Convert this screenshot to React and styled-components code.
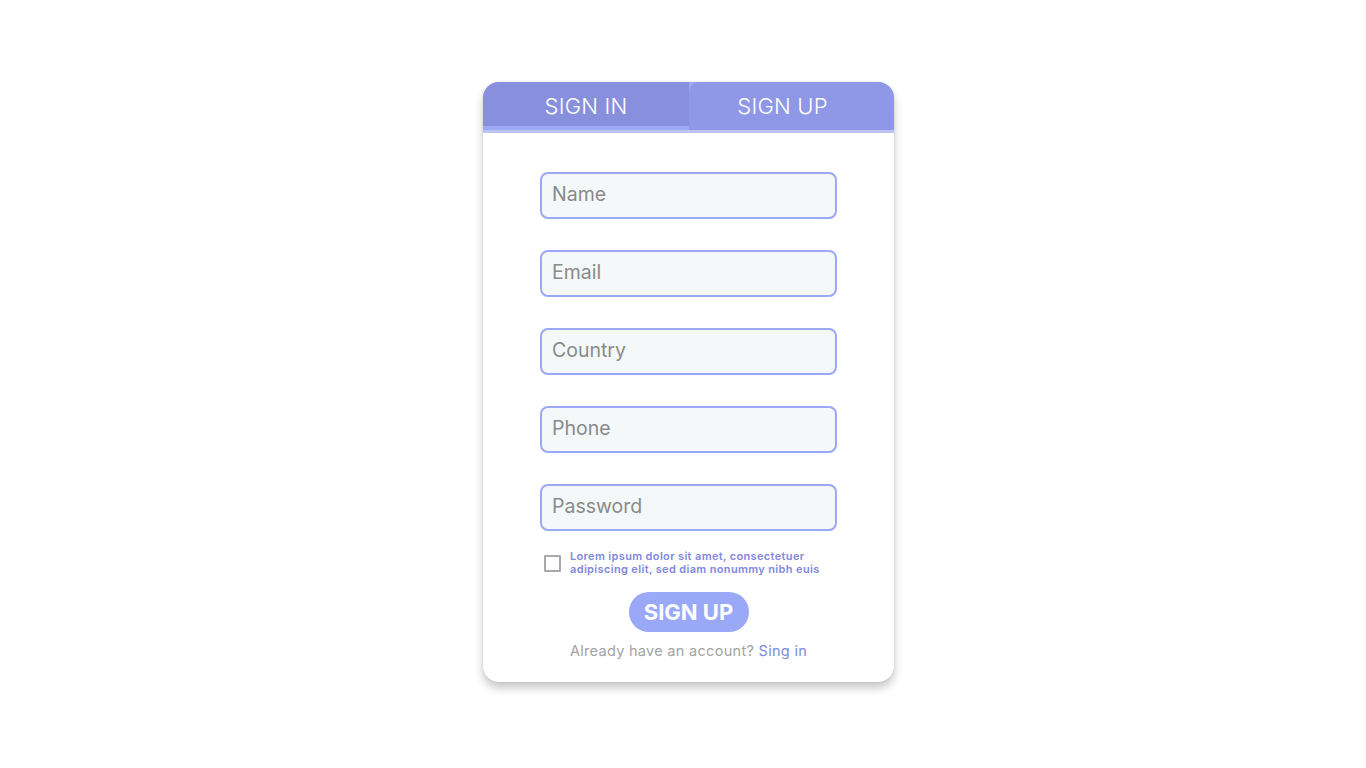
import React, { useState } from "react";
import styled, { createGlobalStyle } from "styled-components";

const GlobalStyle = createGlobalStyle`
  html, body {
    margin: 0;
    padding: 0;
    background: #ffffff;
    font-family: "Inter", "Noto Sans", sans-serif;
  }
`;

const Page = styled.div`
  width: 1366px;
  height: 768px;
  display: flex;
  justify-content: center;
  padding: 82px 0 0 11px;
  box-sizing: border-box;
`;

const Card = styled.div`
  width: 411px;
  height: 600px;
  background: #fff;
  border-radius: 16px;
  overflow: hidden;
  box-shadow: 0 6px 10px rgba(0, 0, 0, 0.22), 0 0 3px rgba(0, 0, 0, 0.08);
  display: flex;
  flex-direction: column;
`;

const Header = styled.div`
  display: flex;
  align-items: flex-start;
  height: 48px;
  background: #9ea9f3;
  border-bottom: 3px solid #bcc2f1;
`;

const Tab = styled.button`
  flex: none;
  width: ${(p) => (p.$active ? "205px" : "206px")};
  box-sizing: border-box;
  border: none;
  margin: 0;
  padding: 4px ${(p) => (p.$active ? "18px" : "0")} 0 0;
  height: ${(p) => (p.$active ? "48px" : "44px")};
  background: ${(p) => (p.$active ? "#8e98e6" : "#8890dd")};
  border-top-left-radius: ${(p) => (p.$active ? "10px" : "0")};
  color: #fff;
  font-family: "Inter", sans-serif;
  font-weight: 300;
  font-size: 22px;
  letter-spacing: 0.2px;
  display: flex;
  align-items: ${(p) => (p.$active ? "flex-start" : "center")};
  justify-content: center;
  line-height: 40px;
  cursor: pointer;
`;

const Form = styled.form`
  display: flex;
  flex-direction: column;
  align-items: center;
  padding-top: 39px;
`;

const Fields = styled.div`
  display: flex;
  flex-direction: column;
  gap: 31px;
`;

const Input = styled.input`
  width: 297px;
  height: 47px;
  box-sizing: border-box;
  border: 2.5px solid #9ba8f6;
  border-radius: 8px;
  background: #f4f8f9;
  padding: 0 10px 4px;
  font-family: "Inter", sans-serif;
  font-size: 19.5px;
  color: #555;
  outline: none;

  &::placeholder {
    color: #8a8a8a;
  }
`;

const Terms = styled.label`
  width: 297px;
  display: flex;
  align-items: center;
  gap: 9px;
  margin-top: 19px;
  padding-left: 4px;
  box-sizing: border-box;
`;

const Box = styled.input`
  appearance: none;
  width: 17px;
  height: 17px;
  margin: 0;
  border: 2px solid #a9a9a9;
  border-radius: 1px;
  flex-shrink: 0;
  background: #fff;
`;

const TermsText = styled.span`
  font-family: "Inter", sans-serif;
  font-weight: 600;
  font-size: 11px;
  line-height: 13px;
  color: #8088e0;
  letter-spacing: 0.35px;
`;

const SubmitButton = styled.button`
  margin-top: 16px;
  width: 120px;
  height: 40px;
  border: none;
  border-radius: 20px;
  background: #9aa8f8;
  color: #fff;
  font-family: "Inter", sans-serif;
  font-weight: 700;
  font-size: 22px;
  cursor: pointer;
`;

const Footer = styled.p`
  margin: 10px 0 0;
  font-family: "Inter", sans-serif;
  font-size: 14.5px;
  letter-spacing: 0.3px;
  color: #a3a3a3;
`;

const Link = styled.a`
  color: #8088e0;
  text-decoration: none;
`;

function App() {
  const [tab, setTab] = useState("up");

  return (
    <Page>
      <GlobalStyle />
      <Card>
        <Header>
          <Tab $active={tab === "in"} onClick={() => setTab("in")}>SIGN IN</Tab>
          <Tab $active={tab === "up"} onClick={() => setTab("up")}>SIGN UP</Tab>
        </Header>
        <Form onSubmit={(e) => e.preventDefault()}>
          <Fields>
            <Input placeholder="Name" />
            <Input type="email" placeholder="Email" />
            <Input placeholder="Country" />
            <Input placeholder="Phone" />
            <Input type="password" placeholder="Password" />
          </Fields>
          <Terms>
            <Box type="checkbox" />
            <TermsText>
              Lorem ipsum dolor sit amet, consectetuer adipiscing elit, sed diam
              nonummy nibh euis
            </TermsText>
          </Terms>
          <SubmitButton type="submit">SIGN UP</SubmitButton>
          <Footer>
            Already have an account? <Link href="#">Sing in</Link>
          </Footer>
        </Form>
      </Card>
    </Page>
  );
}

export default App;
